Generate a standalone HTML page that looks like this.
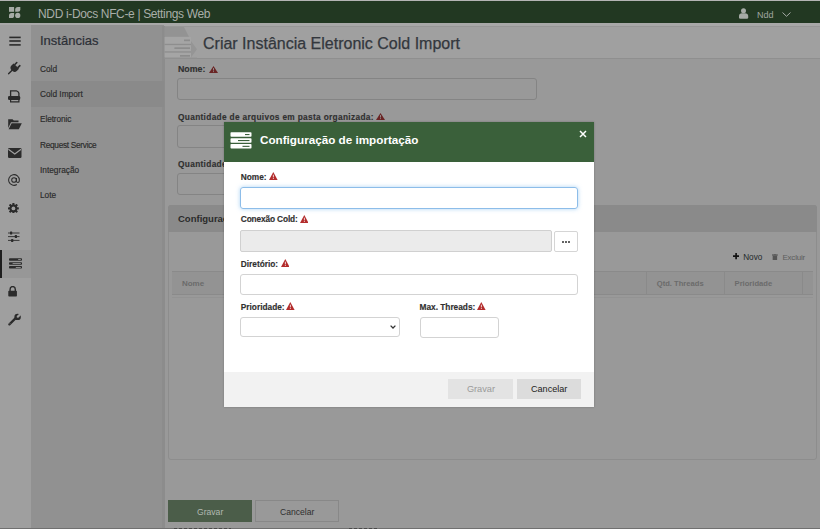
<!DOCTYPE html>
<html><head><meta charset="utf-8">
<style>
*{box-sizing:border-box;margin:0;padding:0}
html,body{width:820px;height:529px;overflow:hidden;background:#999;font-family:"Liberation Sans",sans-serif}
.a{position:absolute}
#top0{left:0;top:0;width:820px;height:1px;background:#b4b4b4}
#tbar{left:0;top:1px;width:820px;height:22px;background:#223822}
#tline{left:0;top:23px;width:820px;height:3px;background:#a8a8a8}
#icol{left:0;top:25px;width:31px;height:504px;background:#9f9f9f}
#mcol{left:31px;top:25px;width:133px;height:504px;background:#919191}
#hdr{left:164px;top:26px;width:656px;height:33px;background:#a0a0a0;border-top:1px solid #979797;border-bottom:1px solid #8f8f8f}
.t{position:absolute;white-space:nowrap;line-height:1}
.mi{font-size:8.3px;color:#2a2a2a;left:40px;-webkit-text-stroke:0.15px #2a2a2a}
.lbl{font-size:8.3px;font-weight:bold;color:#303030;-webkit-text-stroke:0.15px #303030}
.inp{position:absolute;border:1px solid #848484;border-radius:3px}
</style></head><body>
<div class="a" id="top0"></div>
<div class="a" id="tbar"></div>
<div class="a" id="tline"></div>
<div class="a" id="icol"></div>
<div class="a" id="mcol"></div>
<div class="a" id="hdr"></div>
<div class="a" style="left:162px;top:26px;width:3px;height:502px;background:#8c8c8c"></div>

<!-- title bar text -->
<div class="t" style="left:38px;top:7.5px;font-size:12px;letter-spacing:-0.35px;color:#a9aea9">NDD i-Docs NFC-e | Settings Web</div>

<!-- sidebar menu -->
<div class="t" style="left:40px;top:34px;font-size:13px;color:#2c2f36;-webkit-text-stroke:0.2px #2c2f36">Instâncias</div>
<div class="a" style="left:31px;top:81px;width:133px;height:26px;background:#8a8a8a"></div>
<div class="t mi" style="top:65px">Cold</div>
<div class="t mi" style="top:90px">Cold Import</div>
<div class="t mi" style="top:115.3px;letter-spacing:-0.12px">Eletronic</div>
<div class="t mi" style="top:140.8px;letter-spacing:-0.3px">Request Service</div>
<div class="t mi" style="top:165.8px">Integração</div>
<div class="t mi" style="top:191.3px">Lote</div>

<!-- title bar icons -->
<svg class="a" style="left:9px;top:7px" width="12" height="12" viewBox="0 0 12 12">
  <rect x="0" y="0" width="5.1" height="4.8" fill="#a6aba6"/>
  <path d="M6.2 2.6Q6.2 0 8.8 0H11.3V2.3Q11.3 4.8 8.8 4.8H6.2Z" fill="#a6aba6"/>
  <path d="M0 8.4Q0 5.9 2.5 5.9H5.1V8.4Q5.1 11 2.6 11H0Z" fill="#a6aba6"/>
  <circle cx="8.75" cy="8.45" r="2.6" fill="#a6aba6"/>
</svg>
<svg class="a" style="left:739px;top:7.5px" width="10" height="11" viewBox="0 0 10 11">
  <circle cx="4.5" cy="2.7" r="2.5" fill="#a6aba6"/>
  <path d="M0 9.5V8C0 6.3 1.3 5.3 2.8 5.3H6.2C7.7 5.3 9.2 6.3 9.2 8V9.5Q9.2 10.8 7.9 10.8H1.3Q0 10.8 0 9.5Z" fill="#a6aba6"/>
</svg>
<div class="t" style="left:757px;top:10.8px;font-size:9px;color:#a0a6a0">Ndd</div>
<svg class="a" style="left:782px;top:11.5px" width="9" height="5" viewBox="0 0 9 5"><path d="M0.5 0.5L4.5 4.3L8.5 0.5" stroke="#a6aba6" stroke-width="1" fill="none"/></svg>

<!-- sidebar icons -->
<svg class="a" style="left:9px;top:36px" width="12" height="10" viewBox="0 0 12 10"><rect x="0.3" y="0.6" width="11.4" height="1.6" fill="#2b2b2b"/><rect x="0.3" y="4.2" width="11.4" height="1.6" fill="#2b2b2b"/><rect x="0.3" y="8.1" width="11.4" height="1.6" fill="#2b2b2b"/></svg>
<svg class="a" style="left:4px;top:58px" width="22" height="20" viewBox="0 0 22 20">
  <g transform="translate(10.2 10.2) rotate(45)" fill="#2b2b2b">
    <rect x="-3" y="-6.5" width="1.7" height="4" rx="0.6"/>
    <rect x="1.3" y="-6.5" width="1.7" height="4" rx="0.6"/>
    <path d="M-3.8 -3H3.8V-0.2A3.8 3.6 0 0 1 -3.8 -0.2Z"/>
    <rect x="-0.7" y="2.5" width="1.4" height="6" rx="0.5"/>
  </g>
</svg>
<svg class="a" style="left:8px;top:89.5px" width="13" height="13" viewBox="0 0 13 13">
  <path d="M2.6 6.8V0.9H8.4Q10.3 1.2 10.9 3.3V6.8" stroke="#2b2b2b" stroke-width="1.3" fill="none"/>
  <rect x="0" y="5.9" width="12.2" height="4.2" rx="1.3" fill="#2b2b2b"/>
  <path d="M2.6 9V11.9H10.9V9" stroke="#2b2b2b" stroke-width="1.2" fill="none"/>
</svg>
<svg class="a" style="left:8px;top:117.5px" width="14" height="12" viewBox="0 0 14 12">
  <path d="M0.2 11V1.2H4.5L5.8 2.5H10.5V4.2H3L0.2 10Z" fill="#2b2b2b"/>
  <path d="M3.6 5.2H13.8L10.8 11.2H0.6Z" fill="#2b2b2b"/>
</svg>
<svg class="a" style="left:7.8px;top:147.5px" width="14" height="10" viewBox="0 0 14 10">
  <rect x="0" y="0" width="13.5" height="10" rx="1.2" fill="#2b2b2b"/>
  <path d="M0.4 1.3L6.75 6L13.1 1.3" stroke="#9f9f9f" stroke-width="1.2" fill="none"/>
</svg>
<svg class="a" style="left:7.6px;top:174px" width="12" height="12" viewBox="0 0 13 13">
  <path d="M9.2 4.2V7.6C9.2 8.7 10 9.2 10.7 9.2C11.8 9.2 12.3 8 12.3 6.5A5.8 5.8 0 1 0 9.6 11.4" stroke="#2b2b2b" stroke-width="1.1" fill="none"/>
  <circle cx="6.5" cy="6.5" r="2.5" stroke="#2b2b2b" stroke-width="1.1" fill="none"/>
</svg>
<svg class="a" style="left:8.45px;top:202.55px" width="10.8" height="10.8" viewBox="0 0 12 12">
  <g fill="#2b2b2b">
  <circle cx="6" cy="6" r="4.2"/>
  <rect x="4.8" y="0" width="2.4" height="12" rx="0.4"/>
  <rect x="0" y="4.8" width="12" height="2.4" rx="0.4"/>
  <rect x="4.8" y="0" width="2.4" height="12" rx="0.4" transform="rotate(45 6 6)"/>
  <rect x="4.8" y="0" width="2.4" height="12" rx="0.4" transform="rotate(-45 6 6)"/>
  </g>
  <circle cx="6" cy="6" r="2.1" fill="#9f9f9f"/>
</svg>
<svg class="a" style="left:7.8px;top:230.5px" width="12" height="12" viewBox="0 0 12 12">
  <g stroke="#2b2b2b" stroke-width="0.9"><path d="M0 2H11.5M0 5.6H11.5M0 9.4H11.5"/></g>
  <g fill="#2b2b2b"><rect x="2" y="0.5" width="2.2" height="3" rx="0.5"/><rect x="6.8" y="4.1" width="2.2" height="3" rx="0.5"/><rect x="3.1" y="7.9" width="2.2" height="3" rx="0.5"/></g>
</svg>
<div class="a" style="left:0;top:250px;width:31px;height:28px;background:#979797"></div>
<div class="a" style="left:0;top:250px;width:1.6px;height:28px;background:#1e1e1e"></div>
<svg class="a" style="left:8.5px;top:257.5px" width="13" height="11" viewBox="0 0 13 11">
  <rect x="0" y="0.3" width="13" height="2.5" rx="0.8" fill="#2b2b2b"/>
  <rect x="0" y="4.2" width="13" height="2.5" rx="0.8" fill="#2b2b2b"/>
  <rect x="0" y="8.1" width="13" height="2.5" rx="0.8" fill="#2b2b2b"/>
  <rect x="9.2" y="1.2" width="2.6" height="0.8" fill="#a0a0a0"/>
  <rect x="3.6" y="5.1" width="8.2" height="0.8" fill="#a0a0a0"/>
  <rect x="6.8" y="9" width="5" height="0.8" fill="#a0a0a0"/>
</svg>
<svg class="a" style="left:8px;top:285.5px" width="9.4" height="11" viewBox="0 0 10 11" preserveAspectRatio="none">
  <path d="M2.2 5V3.4A2.8 2.8 0 0 1 7.8 3.4V5" stroke="#2b2b2b" stroke-width="1.5" fill="none"/>
  <rect x="0.3" y="4.8" width="9.2" height="5.8" rx="0.8" fill="#2b2b2b"/>
</svg>
<svg class="a" style="left:7.5px;top:313px" width="15" height="13" viewBox="0 0 15 13">
  <path d="M1.4 11.4L7.4 5.4" stroke="#2b2b2b" stroke-width="2.2" stroke-linecap="round"/>
  <circle cx="9.6" cy="3.9" r="3.2" fill="#2b2b2b"/>
  <rect x="-1.1" y="-4.2" width="2.2" height="4.4" fill="#9f9f9f" transform="translate(9.9 3.6) rotate(45)"/>
  <circle cx="9.7" cy="3.8" r="1.05" fill="#9f9f9f"/>
  <circle cx="2" cy="10.8" r="0.45" fill="#9f9f9f"/>
</svg>

<!-- page title -->
<div class="t" style="left:203px;top:35.6px;font-size:16px;color:#33373d;-webkit-text-stroke:0.25px #33373d">Criar Instância Eletronic Cold Import</div>

<!-- background form -->
<div class="t lbl" style="left:178px;top:64.6px;font-size:8.8px">Nome:</div>
<div class="inp" style="left:177px;top:78px;width:360px;height:22px"></div>
<div class="t lbl" style="left:178px;top:112.5px;letter-spacing:0.33px">Quantidade de arquivos em pasta organizada:</div>
<div class="inp" style="left:177px;top:125px;width:360px;height:23px"></div>
<div class="t lbl" style="left:178px;top:160px;letter-spacing:0.33px">Quantidade</div>
<div class="inp" style="left:177px;top:173px;width:360px;height:22px"></div>

<!-- panel -->
<div class="a" style="left:167.5px;top:205px;width:649.5px;height:255px;border:1px solid #8d8d8d;border-radius:3px"></div>
<div class="a" style="left:168px;top:205px;width:649px;height:27px;background:#8a8a8a;border-radius:3px 3px 0 0"></div>
<div class="t" style="left:178px;top:214px;font-size:9.5px;font-weight:bold;color:#2b2b2b">Configuração de importação</div>

<!-- header deco -->
<svg class="a" style="left:164px;top:27px" width="34" height="32" viewBox="0 0 34 32">
  <path d="M0.5 0H20L25 9.8H0.5Z" fill="#939393"/>
  <path d="M0.5 10H27V30.5H0.5Z" fill="#a5a5a5"/>
  <rect x="0.5" y="16.8" width="26.5" height="1.3" fill="#8e8e8e"/>
  <rect x="0.5" y="24.3" width="26.5" height="1.3" fill="#8e8e8e"/>
  <path d="M27 14L33 22.2L27 30.5Z" fill="#959595"/>
  <rect x="20" y="12.5" width="6" height="1.7" fill="#8c8c8c"/>
  <rect x="10.4" y="20.3" width="15.6" height="1.7" fill="#8c8c8c"/>
  <rect x="16" y="28" width="10" height="1.7" fill="#8c8c8c"/>
  <rect x="0" y="30.6" width="33" height="1" fill="#929292"/>
</svg>

<!-- bg warn icons -->
<svg class="a" style="left:208.6px;top:65.5px" width="9" height="7" viewBox="0 0 9 7"><path d="M4.5 0L9 7H0Z" fill="#6a2424"/><rect x="4.05" y="2.1" width="0.9" height="2.4" fill="#999"/><rect x="4.05" y="5.2" width="0.9" height="0.9" fill="#999"/></svg>
<svg class="a" style="left:375.5px;top:112.8px" width="9" height="7" viewBox="0 0 9 7"><path d="M4.5 0L9 7H0Z" fill="#6a2424"/><rect x="4.05" y="2.1" width="0.9" height="2.4" fill="#999"/><rect x="4.05" y="5.2" width="0.9" height="0.9" fill="#999"/></svg>

<!-- panel content -->
<svg class="a" style="left:732.8px;top:253.4px" width="6.2" height="6.2" viewBox="0 0 6 6"><path d="M3 0V6M0 3H6" stroke="#111" stroke-width="1.6"/></svg>
<div class="t" style="left:743.2px;top:253.6px;font-size:8.2px;color:#1f2a2a">Novo</div>
<svg class="a" style="left:772.2px;top:253.5px" width="5.8" height="6.5" viewBox="0 0 6 6.5"><rect x="0" y="0.3" width="6" height="1.2" fill="#555"/><rect x="0.7" y="1.5" width="4.6" height="5" fill="#555"/><rect x="2" y="0" width="2" height="0.6" fill="#555"/></svg>
<div class="t" style="left:782.4px;top:253.6px;font-size:8px;letter-spacing:-0.2px;color:#5d5d5d">Excluir</div>
<div class="a" style="left:172px;top:271px;width:641px;height:23.5px;background:#939393;border-top:1px solid #8a8a8a;border-bottom:1px solid #8a8a8a"></div>
<div class="a" style="left:645.5px;top:271px;width:1px;height:23.5px;background:#8a8a8a"></div>
<div class="a" style="left:723.5px;top:271px;width:1px;height:23.5px;background:#8a8a8a"></div>
<div class="a" style="left:801.5px;top:271px;width:1px;height:23.5px;background:#8a8a8a"></div>
<div class="a" style="left:172px;top:297px;width:641px;height:1px;background:#939393"></div>
<div class="t" style="left:181.9px;top:280px;font-size:8px;font-weight:bold;color:#6b6b6b">Nome</div>
<div class="t" style="left:656.8px;top:280px;font-size:7.6px;font-weight:bold;color:#6b6b6b">Qtd. Threads</div>
<div class="t" style="left:734.6px;top:280px;font-size:7.6px;font-weight:bold;color:#6b6b6b">Prioridade</div>

<!-- bottom buttons -->
<div class="a" style="left:167.8px;top:500px;width:84.4px;height:21.5px;background:#4b5d49"></div>
<div class="t" style="left:197px;top:508px;font-size:8.6px;color:#b2b9b1">Gravar</div>
<div class="a" style="left:255px;top:500px;width:84.3px;height:21.5px;border:1px solid #888"></div>
<div class="t" style="left:280px;top:508px;font-size:8.6px;color:#2f2f2f">Cancelar</div>
<div class="a" style="left:0;top:528px;width:820px;height:1px;background:#707070"></div>
<div class="a" style="left:174px;top:528px;width:57px;height:1px;background:repeating-linear-gradient(90deg,#484848 0 3.5px,#777 3.5px 5px)"></div>
<div class="a" style="left:349px;top:528px;width:30px;height:1px;background:repeating-linear-gradient(90deg,#484848 0 3.5px,#777 3.5px 5px)"></div>

<!-- modal -->
<div class="a" id="modal" style="left:224px;top:122px;width:370px;height:285px;background:#fff;box-shadow:0 0 2px rgba(0,0,0,.25)">
  <div class="a" style="left:0;top:0;width:370px;height:40px;background:#3a603a"></div>
  <svg class="a" style="left:6px;top:10px" width="22" height="17" viewBox="0 0 22 17">
    <rect x="0.5" y="0.2" width="21" height="4.5" rx="0.8" fill="#fff"/>
    <rect x="0.5" y="6.2" width="21" height="4.5" rx="0.8" fill="#fff"/>
    <rect x="0.5" y="12" width="21" height="4.5" rx="0.8" fill="#fff"/>
    <rect x="15" y="2" width="4.5" height="1.1" fill="#3a603a"/>
    <rect x="8" y="8" width="11.5" height="1.1" fill="#3a603a"/>
    <rect x="12.5" y="13.8" width="7" height="1.1" fill="#3a603a"/>
  </svg>
  <div class="t" style="left:36px;top:12.2px;font-size:11.7px;font-weight:bold;color:#fff">Configuração de importação</div>
  <svg class="a" style="left:355px;top:8px" width="8" height="8" viewBox="0 0 8 8"><path d="M1 1L7 7M7 1L1 7" stroke="#fff" stroke-width="1.5"/></svg>

  <div class="t lbl" style="left:16.8px;top:50.5px">Nome:</div>
  <svg class="a warn" style="left:45.1px;top:49.9px" width="8.6" height="8" viewBox="0 0 8.6 8"><path d="M4.3 0L8.6 8H0Z" fill="#b32c2c"/><rect x="3.9" y="2.7" width="0.8" height="2.7" fill="#fff"/><rect x="3.9" y="6" width="0.8" height="0.9" fill="#fff"/></svg>
  <div class="a" style="left:16.4px;top:64.6px;width:337.6px;height:22.1px;border:1px solid #8dbde9;border-radius:3px;box-shadow:0 0 4px rgba(102,175,233,.55)"></div>

  <div class="t lbl" style="left:16.8px;top:93.3px;letter-spacing:-0.13px">Conexão Cold:</div>
  <svg class="a warn" style="left:75.8px;top:92.7px" width="8.6" height="8" viewBox="0 0 8.6 8"><path d="M4.3 0L8.6 8H0Z" fill="#b32c2c"/><rect x="3.9" y="2.7" width="0.8" height="2.7" fill="#fff"/><rect x="3.9" y="6" width="0.8" height="0.9" fill="#fff"/></svg>
  <div class="a" style="left:16.4px;top:108px;width:311.2px;height:22px;border:1px solid #d0d0d0;border-radius:2px;background:#ebebeb"></div>
  <div class="a" style="left:330.2px;top:108.5px;width:24px;height:21.5px;border:1px solid #d5d5d5;border-radius:2px;background:#fff"></div>
  <svg class="a" style="left:338px;top:118.5px" width="8" height="2" viewBox="0 0 8 2"><circle cx="1" cy="1" r="0.95" fill="#222"/><circle cx="4" cy="1" r="0.95" fill="#222"/><circle cx="7" cy="1" r="0.95" fill="#222"/></svg>

  <div class="t lbl" style="left:16.8px;top:137.5px">Diretório:</div>
  <svg class="a warn" style="left:56.9px;top:136.9px" width="8.6" height="8" viewBox="0 0 8.6 8"><path d="M4.3 0L8.6 8H0Z" fill="#b32c2c"/><rect x="3.9" y="2.7" width="0.8" height="2.7" fill="#fff"/><rect x="3.9" y="6" width="0.8" height="0.9" fill="#fff"/></svg>
  <div class="a" style="left:16.4px;top:151.5px;width:337.6px;height:21.8px;border:1px solid #d3d3d3;border-radius:3px"></div>

  <div class="t lbl" style="left:16.8px;top:180.8px">Prioridade:</div>
  <svg class="a warn" style="left:62.3px;top:180.2px" width="8.6" height="8" viewBox="0 0 8.6 8"><path d="M4.3 0L8.6 8H0Z" fill="#b32c2c"/><rect x="3.9" y="2.7" width="0.8" height="2.7" fill="#fff"/><rect x="3.9" y="6" width="0.8" height="0.9" fill="#fff"/></svg>
  <div class="a" style="left:16.4px;top:195.4px;width:159.5px;height:19.6px;border:1px solid #d3d3d3;border-radius:3px"></div>
  <svg class="a" style="left:166px;top:202.8px" width="6" height="4" viewBox="0 0 6 4"><path d="M0.6 0.6L3 3L5.4 0.6" stroke="#333" stroke-width="1.3" fill="none"/></svg>

  <div class="t lbl" style="left:195.5px;top:181px;font-family:'Liberation Sans'">Max. Threads:</div>
  <svg class="a warn" style="left:253.2px;top:180.4px" width="8.6" height="8" viewBox="0 0 8.6 8"><path d="M4.3 0L8.6 8H0Z" fill="#b32c2c"/><rect x="3.9" y="2.7" width="0.8" height="2.7" fill="#fff"/><rect x="3.9" y="6" width="0.8" height="0.9" fill="#fff"/></svg>
  <div class="a" style="left:195.5px;top:195.2px;width:79px;height:21.3px;border:1px solid #d3d3d3;border-radius:3px"></div>

  <div class="a" style="left:0;top:250px;width:370px;height:35px;background:#f2f2f2"></div>
  <div class="a" style="left:224.2px;top:257px;width:64.7px;height:20.4px;background:#e3e3e3"></div>
  <div class="t" style="left:242.9px;top:263px;font-size:9.2px;color:#9a9a9a">Gravar</div>
  <div class="a" style="left:292.6px;top:257px;width:64.7px;height:20.4px;background:#dcdcdc"></div>
  <div class="t" style="left:307px;top:263px;font-size:9.1px;color:#222">Cancelar</div>
</div>
</body></html>
